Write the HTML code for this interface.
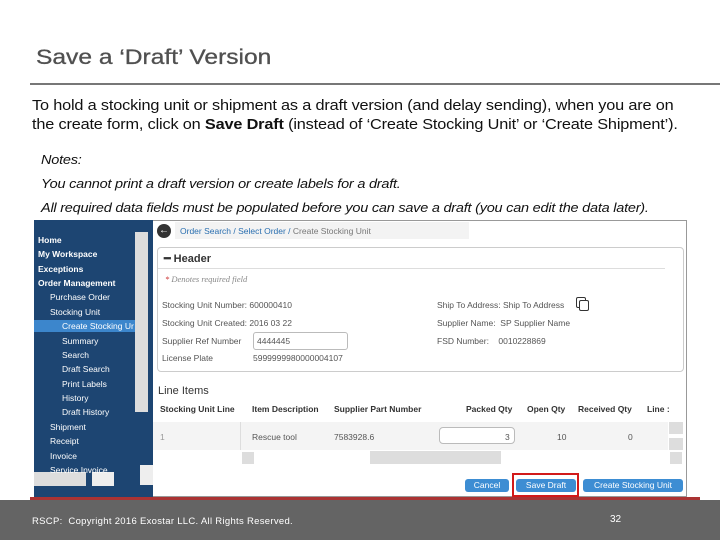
<!DOCTYPE html>
<html><head><meta charset="utf-8"><style>
*{margin:0;padding:0;box-sizing:border-box}
body{width:720px;height:540px;position:relative;background:#fff;font-family:"Liberation Sans",Arial,sans-serif;overflow:hidden}
.a{position:absolute;white-space:nowrap}
.sb{color:#fff;font-size:8.5px;position:absolute;left:38px}
.b{font-weight:bold}
.l{color:#555;font-size:8.5px;position:absolute;white-space:nowrap}
.btn{position:absolute;background:#3d8dd3;color:#fff;font-size:8.5px;text-align:center;border-radius:3px;height:13px;line-height:13px;top:479px}
</style></head><body>
<div class="a" style="left:36px;top:46px;font-size:21px;color:#505050;transform:scaleX(1.17);transform-origin:0 0;-webkit-text-stroke:0.3px #505050">Save a ‘Draft’ Version</div>
<div class="a" style="left:30px;top:83px;width:690px;height:2px;background:#777"></div>
<div class="a" style="left:32px;top:97px;font-size:14.6px;color:#111;line-height:19px;letter-spacing:-0.15px;transform:scaleX(1.115);transform-origin:0 0">To hold a stocking unit or shipment as a draft version (and delay sending), when you are on<br>the create form, click on <b>Save Draft</b> (instead of ‘Create Stocking Unit’ or ‘Create Shipment’).</div>
<div class="a" style="left:41px;top:148px;font-size:12.5px;font-style:italic;color:#111;line-height:24px;letter-spacing:-0.2px;transform:scaleX(1.16);transform-origin:0 0">Notes:<br>You cannot print a draft version or create labels for a draft.<br>All required data fields must be populated before you can save a draft (you can edit the data later).</div>

<!-- screenshot -->
<div class="a" style="left:34px;top:220px;width:653px;height:277px;border:1px solid #999;background:#fff"></div>
<div class="a" style="left:34px;top:220px;width:119px;height:277px;background:#1d4572"></div>
<div class="a" style="left:135px;top:232px;width:13px;height:180px;background:#ddd"></div>
<div class="a" style="left:140px;top:465px;width:13px;height:20px;background:#eee"></div>
<div class="a" style="left:34px;top:472px;width:52px;height:14px;background:#ddd"></div>
<div class="a" style="left:92px;top:472px;width:22px;height:14px;background:#eee"></div>
<div class="a" style="left:34px;top:320px;width:101px;height:12px;background:#3c86cc"></div>
<div class="sb b" style="top:235px">Home</div>
<div class="sb b" style="top:249px">My Workspace</div>
<div class="sb b" style="top:264px">Exceptions</div>
<div class="sb b" style="top:278px">Order Management</div>
<div class="sb" style="left:50px;top:292px">Purchase Order</div>
<div class="sb" style="left:50px;top:307px">Stocking Unit</div>
<div class="sb" style="left:62px;top:321px">Create Stocking Ur</div>
<div class="sb" style="left:62px;top:336px">Summary</div>
<div class="sb" style="left:62px;top:350px">Search</div>
<div class="sb" style="left:62px;top:364px">Draft Search</div>
<div class="sb" style="left:62px;top:379px">Print Labels</div>
<div class="sb" style="left:62px;top:393px">History</div>
<div class="sb" style="left:62px;top:407px">Draft History</div>
<div class="sb" style="left:50px;top:422px">Shipment</div>
<div class="sb" style="left:50px;top:436px">Receipt</div>
<div class="sb" style="left:50px;top:451px">Invoice</div>
<div class="sb" style="left:50px;top:465px">Service Invoice</div>

<div class="a" style="left:157px;top:224px;width:14px;height:14px;border-radius:50%;background:#333;color:#fff;font-size:10px;line-height:14px;text-align:center">&#8592;</div>
<div class="a" style="left:175px;top:222px;width:294px;height:17px;background:#f3f3f3"></div>
<div class="l" style="left:180px;top:226px;color:#2a6fb0">Order Search / Select Order / <span style="color:#777">Create Stocking Unit</span></div>
<div class="a" style="left:157px;top:247px;width:527px;height:125px;border:1px solid #ccc;border-radius:4px"></div>
<div class="a" style="left:158px;top:268px;width:507px;height:1px;background:#ddd"></div>
<div class="a" style="left:164px;top:252px;font-size:11px;font-weight:bold;color:#333">━ Header</div>
<div class="l" style="left:165px;top:274px;font-family:'Liberation Serif',serif;font-style:italic;color:#888"><span style="color:#c33">*</span> Denotes required field</div>
<div class="l" style="left:162px;top:300px">Stocking Unit Number: 600000410</div>
<div class="l" style="left:162px;top:318px">Stocking Unit Created: 2016 03 22</div>
<div class="l" style="left:162px;top:336px">Supplier Ref Number</div>
<div class="a" style="left:253px;top:332px;width:95px;height:18px;border:1px solid #bbb;border-radius:3px"></div>
<div class="l" style="left:257px;top:336px">4444445</div>
<div class="l" style="left:162px;top:353px">License Plate</div>
<div class="l" style="left:253px;top:353px">5999999980000004107</div>
<div class="l" style="left:437px;top:300px">Ship To Address: Ship To Address</div>
<div class="a" style="left:576px;top:297px;width:10px;height:11px;border:1.5px solid #333;border-radius:2px;background:#fff"></div>
<div class="a" style="left:579px;top:300px;width:10px;height:11px;border:1.5px solid #333;border-radius:2px;background:#fff"></div>
<div class="l" style="left:437px;top:318px">Supplier Name:&nbsp; SP Supplier Name</div>
<div class="l" style="left:437px;top:336px">FSD Number:&nbsp;&nbsp;&nbsp; 0010228869</div>
<div class="a" style="left:158px;top:385px;font-size:11px;color:#333">Line Items</div>
<div class="l b" style="left:160px;top:404px;color:#333">Stocking Unit Line</div>
<div class="l b" style="left:252px;top:404px;color:#333">Item Description</div>
<div class="l b" style="left:334px;top:404px;color:#333">Supplier Part Number</div>
<div class="l b" style="left:466px;top:404px;color:#333">Packed Qty</div>
<div class="l b" style="left:527px;top:404px;color:#333">Open Qty</div>
<div class="l b" style="left:578px;top:404px;color:#333">Received Qty</div>
<div class="l b" style="left:647px;top:404px;color:#333">Line :</div>
<div class="a" style="left:153px;top:422px;width:515px;height:28px;background:#f4f4f4"></div>
<div class="a" style="left:240px;top:422px;width:1px;height:28px;background:#ddd"></div>
<div class="l" style="left:160px;top:432px;color:#999">1</div>
<div class="l" style="left:252px;top:432px">Rescue tool</div>
<div class="l" style="left:334px;top:432px">7583928.6</div>
<div class="a" style="left:439px;top:427px;width:76px;height:17px;border:1px solid #bbb;border-radius:4px;background:#fff"></div>
<div class="l" style="left:505px;top:432px">3</div>
<div class="l" style="left:557px;top:432px">10</div>
<div class="l" style="left:628px;top:432px">0</div>
<div class="a" style="left:669px;top:422px;width:14px;height:12px;background:#ddd"></div>
<div class="a" style="left:669px;top:438px;width:14px;height:12px;background:#ddd"></div>
<div class="a" style="left:670px;top:452px;width:12px;height:12px;background:#ddd"></div>
<div class="a" style="left:242px;top:452px;width:12px;height:12px;background:#ddd"></div>
<div class="a" style="left:370px;top:451px;width:131px;height:13px;background:#ddd"></div>
<div class="btn" style="left:465px;width:44px">Cancel</div>
<div class="btn" style="left:516px;width:60px">Save Draft</div>
<div class="btn" style="left:583px;width:100px">Create Stocking Unit</div>
<div class="a" style="left:512px;top:473px;width:67px;height:24px;border:2.5px solid #d21a1a"></div>

<div class="a" style="left:30px;top:497px;width:670px;height:3px;background:#a33"></div>
<div class="a" style="left:0;top:500px;width:720px;height:40px;background:#646464"></div>
<div class="a" style="left:32px;top:516px;font-size:9.5px;color:#fff;letter-spacing:0.3px">RSCP:&nbsp; Copyright 2016 Exostar LLC. All Rights Reserved.</div>
<div class="a" style="left:610px;top:514px;font-size:10px;color:#fff">32</div>
</body></html>
